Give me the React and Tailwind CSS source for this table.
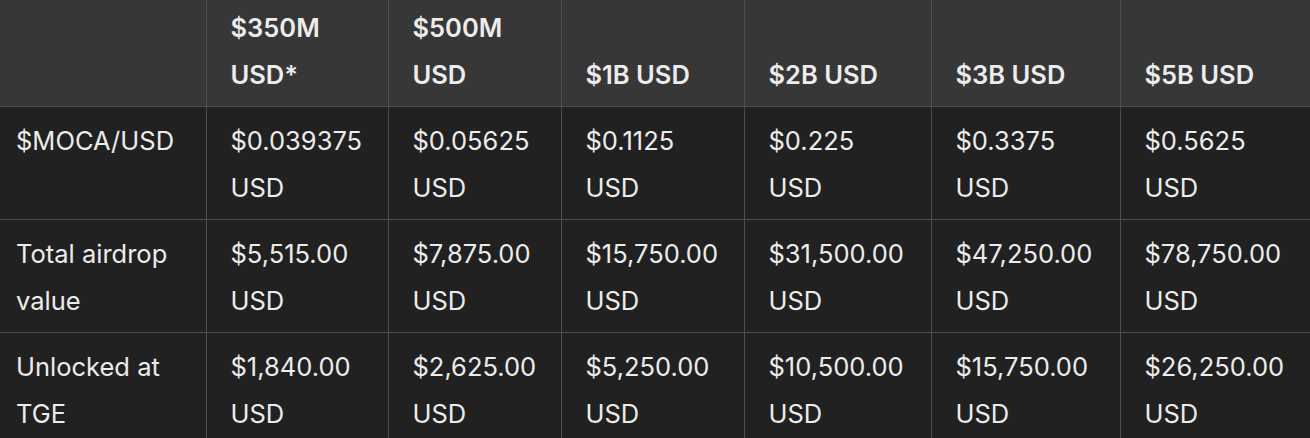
import React from "react";

const heads = [
  ["$350M", "USD*"],
  ["$500M", "USD"],
  ["$1B USD"],
  ["$2B USD"],
  ["$3B USD"],
  ["$5B USD"],
];

const widths = ["w-[206px]", "w-[182px]", "w-[173px]", "w-[183px]", "w-[187px]", "w-[189px]", "w-[190px]"];

const rows = [
  {
    label: ["$MOCA/USD"],
    vals: ["$0.039375", "$0.05625", "$0.1125", "$0.225", "$0.3375", "$0.5625"],
  },
  {
    label: ["Total airdrop", "value"],
    vals: ["$5,515.00", "$7,875.00", "$15,750.00", "$31,500.00", "$47,250.00", "$78,750.00"],
  },
  {
    label: ["Unlocked at", "TGE"],
    vals: ["$1,840.00", "$2,625.00", "$5,250.00", "$10,500.00", "$15,750.00", "$26,250.00"],
  },
];

function Lines({ lines }) {
  return lines.map((l, i) => (
    <div key={i} className="whitespace-nowrap">
      {l}
    </div>
  ));
}

export default function App() {
  return (
    <div className="w-[1310px] h-[438px] overflow-hidden bg-[#212121] font-['Inter',sans-serif] text-[25.5px] leading-[47px] text-[#ececec]">
      <table className="table-fixed border-collapse w-[1310px]">
        <colgroup>
          {widths.map((w, i) => (
            <col key={i} className={w} />
          ))}
        </colgroup>
        <thead>
          <tr className="bg-[#373737] h-[106px]">
            <th className="border-b border-[#4d4d4d]" />
            {heads.map((h, i) => (
              <th
                key={i}
                className="border-l border-b border-[#4d4d4d] pl-6 pb-[8px] align-bottom text-left font-semibold"
              >
                <Lines lines={h} />
              </th>
            ))}
          </tr>
        </thead>
        <tbody>
          {rows.map((r, i) => (
            <tr key={i} className="bg-[#212121]">
              <td className="border-b border-[#4d4d4d] pl-4 pt-[10px] pb-[8px] align-top">
                <Lines lines={r.label} />
              </td>
              {r.vals.map((v, j) => (
                <td
                  key={j}
                  className="border-l border-b border-[#4d4d4d] pl-6 pt-[10px] pb-[8px] align-top"
                >
                  <Lines lines={[v, "USD"]} />
                </td>
              ))}
            </tr>
          ))}
        </tbody>
      </table>
    </div>
  );
}
